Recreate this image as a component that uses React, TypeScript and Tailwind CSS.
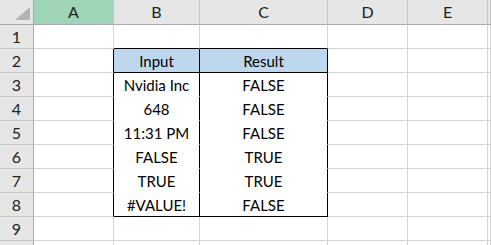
import React from "react";

const COLS = ["A", "B", "C", "D", "E", ""];
const WIDTHS = ["w-[80px]", "w-[86px]", "w-[128px]", "w-[80px]", "w-[80px]", "flex-1"];

const DATA: Record<number, [string, string]> = {
  2: ["Input", "Result"],
  3: ["Nvidia Inc", "FALSE"],
  4: ["648", "FALSE"],
  5: ["11:31 PM", "FALSE"],
  6: ["FALSE", "TRUE"],
  7: ["TRUE", "TRUE"],
  8: ["#VALUE!", "FALSE"],
};

const font = { fontFamily: "Lato, 'Open Sans', sans-serif" };

function Cell({ row, col }: { row: number; col: number }) {
  const inTable = row >= 2 && row <= 8;
  // table outline and the B|C divider are black, everything else is gridline grey
  let right = "border-r-[#d4d4d4]";
  if (col <= 2 && inTable) right = "border-r-black";
  let bottom = "border-b-[#d4d4d4]";
  if ((col === 1 || col === 2) && (row === 1 || row === 2 || row === 8)) bottom = "border-b-black";
  else if ((col === 1 || col === 2) && row >= 3 && row <= 7) bottom = "border-b-white";
  const fill = (col === 1 || col === 2) && row === 2 ? "bg-[#bdd7ee]" : "bg-white";
  const text = (col === 1 || col === 2) && DATA[row] ? DATA[row][col - 1] : "";
  return (
    <div
      className={`${WIDTHS[col]} h-full shrink-0 border-r border-b ${right} ${bottom} ${fill} flex items-end justify-center pb-[1px] text-[15px] leading-[20px] text-black`}
    >
      {text}
    </div>
  );
}

export default function App() {
  const rows = Array.from({ length: 9 }, (_, i) => i + 1);
  return (
    <div className="w-[491px] h-[245px] overflow-hidden bg-white select-none" style={font}>
      {/* column header strip */}
      <div className="flex h-[25px]">
        <div className="relative w-[34px] h-full shrink-0 bg-[#e6e6e6] border-r border-b border-r-[#ababab] border-b-[#ababab]">
          <svg className="absolute left-0 top-0" width="33" height="24" viewBox="0 0 33 24">
            <polygon points="15,20 30,20 30,7" fill="#b4b4b4" />
          </svg>
        </div>
        {COLS.map((c, i) => (
          <div
            key={i}
            className={`${WIDTHS[i]} h-full shrink-0 border-b border-b-[#ababab] border-r border-r-[#c6c6c6] ${
              i === 0 ? "bg-[#9fd5b7]" : "bg-[#e6e6e6]"
            } flex items-center justify-center text-[16px] text-[#222]`}
          >
            {c}
          </div>
        ))}
      </div>
      {rows.map((r) => (
        <div key={r} className="flex h-[24px]">
          <div className="w-[34px] h-full shrink-0 bg-[#e6e6e6] border-r border-b border-r-[#ababab] border-b-[#c6c6c6] flex items-center justify-center text-[16px] text-[#222]">
            {r}
          </div>
          {COLS.map((_, i) => (
            <Cell key={i} row={r} col={i} />
          ))}
        </div>
      ))}
      {/* top sliver of the next row */}
      <div className="flex h-[24px]">
        <div className="w-[34px] h-full shrink-0 bg-[#e6e6e6] border-r border-r-[#ababab]" />
        {COLS.map((_, i) => (
          <div key={i} className={`${WIDTHS[i]} h-full shrink-0 border-r border-r-[#d4d4d4] bg-white`} />
        ))}
      </div>
    </div>
  );
}
